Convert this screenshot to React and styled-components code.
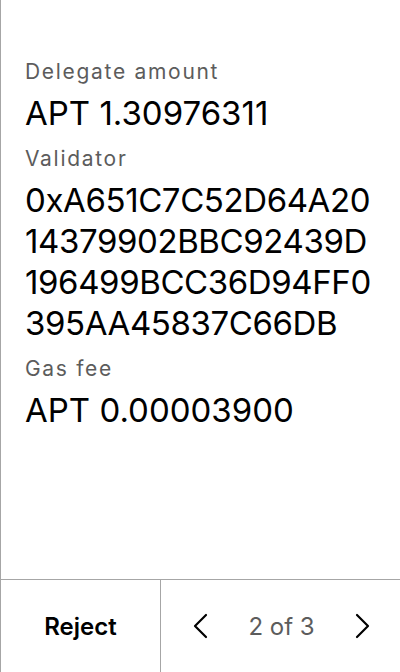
import React from "react";
import styled, { createGlobalStyle } from "styled-components";

const Global = createGlobalStyle`
  html, body {
    margin: 0;
    padding: 0;
    background: #fff;
  }
  body {
    font-family: Inter, "Noto Sans", sans-serif;
    color: #000;
  }
`;

const Screen = styled.div`
  width: 400px;
  height: 672px;
  box-sizing: border-box;
  border-left: 1px solid #a6a6a6;
  display: flex;
  flex-direction: column;
`;

const Body = styled.div`
  flex: 1;
  padding: 58px 24px 0 24px;
`;

const Label = styled.div`
  font-size: 21px;
  line-height: 28px;
  letter-spacing: 1.7px;
  color: #5c5c5c;
  margin-bottom: 7px;
`;

const Value = styled.div`
  font-size: 33px;
  line-height: 41px;
  margin-bottom: 11px;
  letter-spacing: ${(p) => (p.$tight ? "-0.4px" : "0")};
  word-break: break-all;
`;

const Footer = styled.div`
  height: 92px;
  border-top: 1px solid #a6a6a6;
  display: flex;
`;

const RejectButton = styled.button`
  width: 160px;
  border: 0;
  border-right: 1px solid #a6a6a6;
  background: transparent;
  font-family: inherit;
  font-size: 24px;
  font-weight: 600;
  color: #000;
  padding: 0;
`;

const Pager = styled.div`
  flex: 1;
  display: flex;
  align-items: center;
  justify-content: space-between;
  padding: 0 26px 0 28px;
`;

const Arrow = styled.button`
  border: 0;
  background: transparent;
  padding: 0;
  width: 24px;
  height: 24px;
  display: flex;
  align-items: center;
  justify-content: center;
`;

const PageCount = styled.span`
  font-size: 24px;
  color: #5c5c5c;
`;

const Chevron = ({ dir }) => (
  <svg width="24" height="26" viewBox="0 0 24 26" fill="none" stroke="#000" strokeWidth="2.2" strokeLinecap="round" strokeLinejoin="round">
    {dir === "left" ? <path d="M17 2 L6 13 L17 24" /> : <path d="M7 2 L18 13 L7 24" />}
  </svg>
);

const fields = [
  { label: "Delegate amount", value: "APT 1.30976311" },
  { label: "Validator", value: "0xA651C7C52D64A2014379902BBC92439D196499BCC36D94FF0395AA45837C66DB", address: true },
  { label: "Gas fee", value: "APT 0.00003900" },
];

export default function App() {
  return (
    <>
      <Global />
      <Screen>
        <Body>
          {fields.map((f) => (
            <React.Fragment key={f.label}>
              <Label>{f.label}</Label>
              <Value $tight={f.address}>{f.value}</Value>
            </React.Fragment>
          ))}
        </Body>
        <Footer>
          <RejectButton>Reject</RejectButton>
          <Pager>
            <Arrow aria-label="Previous"><Chevron dir="left" /></Arrow>
            <PageCount>2 of 3</PageCount>
            <Arrow aria-label="Next"><Chevron dir="right" /></Arrow>
          </Pager>
        </Footer>
      </Screen>
    </>
  );
}
